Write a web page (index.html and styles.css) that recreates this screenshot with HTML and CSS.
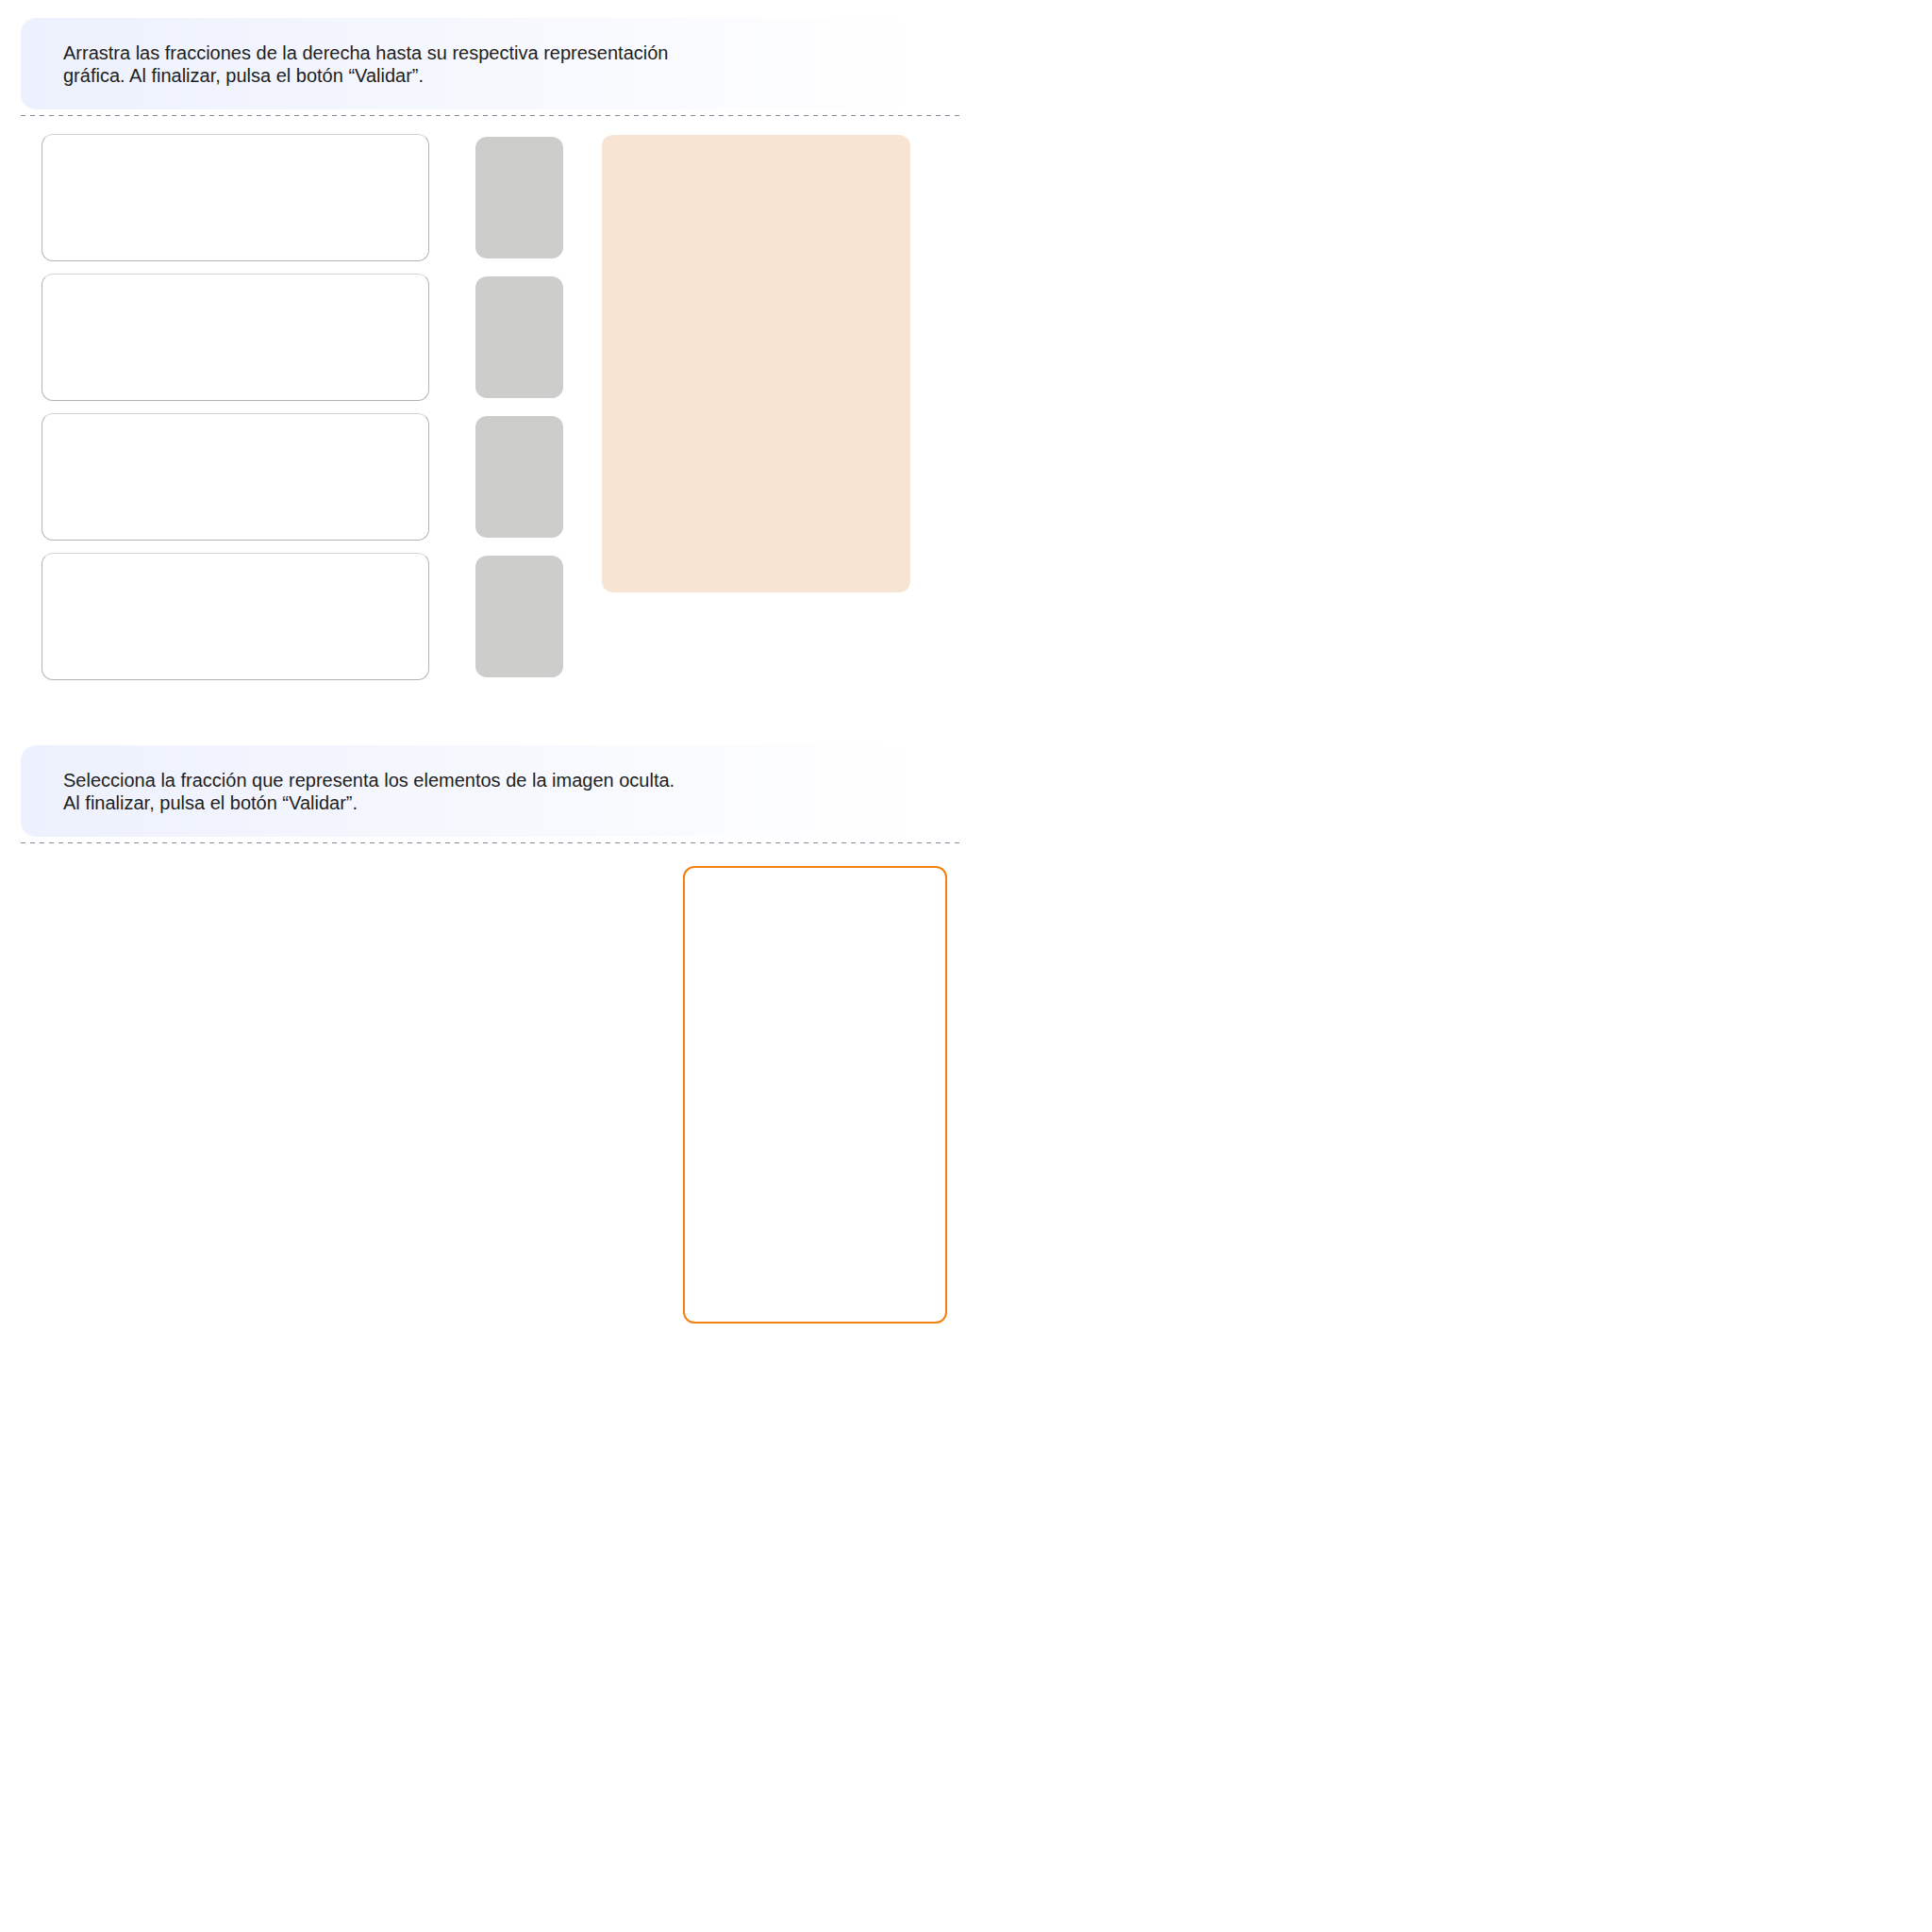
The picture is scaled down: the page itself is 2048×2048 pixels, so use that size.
FILE: index.html
```html
<!DOCTYPE html>
<html lang="es">
<head>
  <meta charset="UTF-8">
  <title>Fracciones</title>
  <link rel="stylesheet" href="styles.css">
</head>
<body>

  <section class="activity">
    <div class="statement">
      Arrastra las fracciones de la derecha hasta su respectiva representación<br>
      gráfica. Al finalizar, pulsa el botón “Validar”.
    </div>
    <div class="divider"></div>

    <div class="board">
      <div class="pairs">
        <div class="pair"><div class="drop"></div><div class="chip"></div></div>
        <div class="pair"><div class="drop"></div><div class="chip"></div></div>
        <div class="pair"><div class="drop"></div><div class="chip"></div></div>
        <div class="pair"><div class="drop"></div><div class="chip"></div></div>
      </div>
      <div class="tray"></div>
    </div>
  </section>

  <section class="activity second">
    <div class="statement">
      Selecciona la fracción que representa los elementos de la imagen oculta.<br>
      Al finalizar, pulsa el botón “Validar”.
    </div>
    <div class="divider"></div>

    <div class="choice-area">
      <div class="hidden-card"></div>
    </div>
  </section>

</body>
</html>
```

FILE: styles.css
```css
body {
  margin: 0;
  padding: 19px 0 0 22px;
  font-family: "Liberation Sans", Arial, sans-serif;
  background: #fff;
  color: #222;
}

.activity {
  width: 1000px;
}

.second {
  margin-top: 69px;
}

.statement {
  padding: 25px 45px 24px;
  font-size: 20px;
  line-height: 24px;
  color: #1e1e1e;
  border-radius: 16px;
  background: linear-gradient(to right, #edf1fd 0%, #f6f8fe 50%, #ffffff 95%);
}

.divider {
  height: 1px;
  margin-top: 6px;
  background: repeating-linear-gradient(to right, #868d9a 0 5px, transparent 5px 10px);
}

.board {
  display: flex;
  align-items: flex-start;
  padding: 19px 0 0 22px;
}

.pairs {
  display: flex;
  flex-direction: column;
  gap: 13px;
}

.pair {
  display: flex;
  align-items: center;
  gap: 49px;
}

.drop {
  width: 409px;
  height: 133px;
  border: 1px solid #b4b4b4;
  border-top-color: #d2d2d2;
  border-radius: 12px;
  background: #fff;
}

.chip {
  width: 93px;
  height: 129px;
  border-radius: 12px;
  background: #cdcdcb;
}

.tray {
  width: 327px;
  height: 485px;
  margin: 1px 0 0 41px;
  border-radius: 12px;
  background: #f8e4d3;
}

.choice-area {
  display: flex;
  justify-content: flex-end;
  padding: 24px 18px 0 0;
}

.hidden-card {
  width: 276px;
  height: 481px;
  border: 2px solid #f5800f;
  border-radius: 12px;
}
```
